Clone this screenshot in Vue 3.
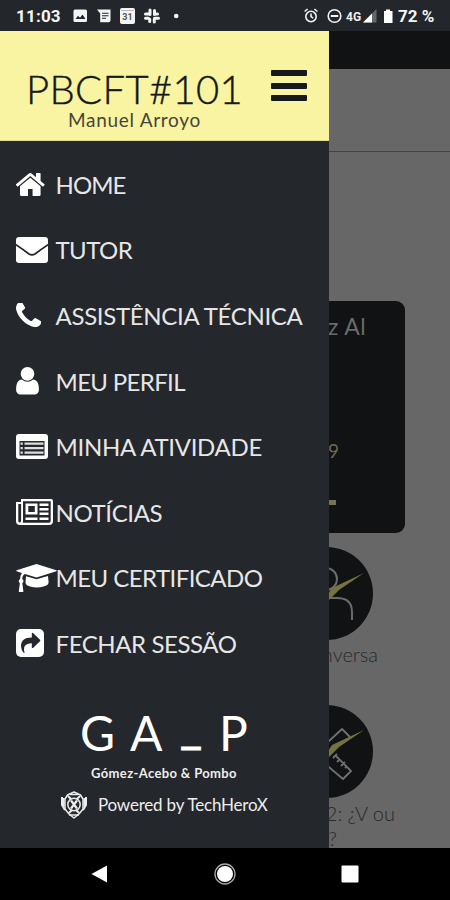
<script setup>
const items = [
  { label: 'HOME', icon: 'home', w: 28.6, h: 23, box: '97 253 1600 1284', spacing: -0.9 },
  { label: 'TUTOR', icon: 'mail', w: 32, h: 26, box: '0 0 32 26', spacing: -0.55 },
  { label: 'ASSISTÊNCIA TÉCNICA', icon: 'phone', w: 25.2, h: 25.2, box: '192 192 1408 1408', spacing: -0.32 },
  { label: 'MEU PERFIL', icon: 'user', w: 23, h: 27.4, box: '256 128 1280 1536', spacing: -0.65 },
  { label: 'MINHA ATIVIDADE', icon: 'list', w: 32, h: 25, box: '0 0 32 25', spacing: -0.3 },
  { label: 'NOTÍCIAS', icon: 'news', w: 37, h: 26, box: '0 0 37 26', spacing: -0.38 },
  { label: 'MEU CERTIFICADO', icon: 'cap', w: 41, h: 28, box: '0 0 41 28', spacing: -0.56 },
  { label: 'FECHAR SESSÃO', icon: 'share', w: 28, h: 28, box: '0 0 28 28', spacing: -0.42 },
]
</script>

<template>
  <div class="phone">
    <header class="status">
      <span class="clock">11:03</span>
      <svg class="notifs" width="110" height="20" viewBox="0 0 110 20">
        <rect x="1.500" y="3.500" width="13.500" height="12.500" rx="1.500" fill="#f4f4f4" />
        <path d="M3.500 13 6 9.800l2 2 2.500-3.300L13.500 13z" fill="#23272b" />
        <path d="M25 3.500h13.500v10.700a2 2 0 0 1-2 2h-8.300V7.500z" fill="#f4f4f4" />
        <path d="M30 7.300h6.500M30 9.800h6.500M30 12.300h4" stroke="#23272b" stroke-width="1.100" />
        <rect x="48" y="2" width="15" height="16" rx="2" fill="#f4f4f4" />
        <path d="M49 4.500h13" stroke="#bbb" stroke-width="1" />
        <text x="55.500" y="13.800" class="cal">31</text>
        <g stroke="#f4f4f4" stroke-width="3" stroke-linecap="round">
          <path d="M78 4v4.500M82.500 4.500v4M73.500 8h4.500M83 8h2.500M73.500 12.300h3M82.500 12.300h4M77.700 13v2.500M82.300 13v3" />
        </g>
        <circle cx="104.200" cy="10" r="2.300" fill="#f4f4f4" />
      </svg>
      <svg class="system" width="94" height="20" viewBox="0 0 94 20">
        <g fill="none" stroke="#f2f2f2" stroke-width="1.600">
          <circle cx="9" cy="10.500" r="5.200" />
          <path d="M9 7.500v3.200l2.200 1.500M2.600 5.500l3-2.500M15.400 5.500l-3-2.500" />
          <circle cx="32.500" cy="10" r="6.300" />
          <path d="M28.800 10h7.400" stroke-width="2" />
        </g>
        <text x="44" y="14.800" class="net">4G</text>
        <path d="M61 16.500h13.500V3z" fill="#666" />
        <path d="M61 16.500h9V7.500z" fill="#fff" />
        <path d="M82 5h2V3.500h4V5h2.500v12H82z" fill="#fff" />
      </svg>
      <span class="battery">72 %</span>
    </header>

    <main class="stage">
      <section class="page">
        <div class="topbar"></div>
        <div class="subbar"></div>
        <div class="card">
          <p class="card-name">z Al</p>
          <p class="card-num">9</p>
          <span class="card-dash"></span>
        </div>
        <svg class="disc" width="93" height="93" viewBox="0 0 93 93">
          <circle cx="46.500" cy="46.500" r="46.500" fill="#101214" />
          <g fill="none" stroke="#6b6b6b" stroke-width="2">
            <circle cx="46" cy="32" r="11" />
            <path d="M48 51h9q15 0 15 14v8" />
          </g>
          <path d="M40 59 52 41 84 26 59 43 45 57z" fill="#75733f" />
        </svg>
        <p class="caption">nversa</p>
        <svg class="disc second" width="93" height="93" viewBox="0 0 93 93">
          <circle cx="46.500" cy="46.500" r="46.500" fill="#101214" />
          <g fill="none" stroke="#707070" stroke-width="1.800" stroke-linejoin="round">
            <path d="M48 37 62 24l8 8M43 57l20 17 8-8-15-15M53 53l4-4M57 57l3-3M61 61l4-4M65 63l2-2" />
          </g>
          <path d="M40 58 52 40 84 25 59 42 45 56z" fill="#75733f" />
        </svg>
        <p class="caption wide">2: ¿V ou</p>
        <p class="caption last">?</p>
      </section>

      <aside class="drawer">
        <div class="head">
          <div class="titles">
            <h1>PBCFT#101</h1>
            <p>Manuel Arroyo</p>
          </div>
          <div class="burger"><i></i><i></i><i></i></div>
        </div>
        <nav>
          <a v-for="it in items" :key="it.icon" class="item">
            <span class="ico">
              <svg :width="it.w" :height="it.h" :viewBox="it.box" fill="#fff">
                <path v-if="it.icon === 'home'" d="M1472 992v480q0 26-19 45t-45 19h-384v-384h-256v384h-384q-26 0-45-19t-19-45v-480q0-1 .5-3t.5-3l575-474 575 474q1 2 1 6zm223-69l-62 74q-8 9-21 11h-3q-13 0-21-7l-692-577-692 577q-12 8-24 7-13-2-21-11l-62-74q-8-10-7-23.500t11-21.500l719-599q32-26 76-26t76 26l244 204v-195q0-14 9-23t23-9h192q14 0 23 9t9 23v408l219 182q10 8 11 21.500t-7 23.500z" />
                <template v-else-if="it.icon === 'mail'">
                  <rect width="32" height="26" rx="3.200" />
                  <path d="M-.5 7.500Q7 12.500 13 17q3 1.800 6 0 6-4.500 13.500-9.500" fill="none" stroke="#24272b" stroke-width="1.700" />
                </template>
                <path v-else-if="it.icon === 'phone'" d="M1600 1240q0 27-10 70.500t-21 68.500q-21 50-122 106-94 51-186 51-27 0-53-3.500t-57.500-12.500-47-14.500-55.500-20.500-49-18q-98-35-175-83-127-79-264-216t-216-264q-48-77-83-175-3-9-18-49t-20.500-55.500-14.500-47-12.500-57.500-3.500-53q0-92 51-186 56-101 106-122 25-11 68.500-21t70.500-10q14 0 21 3 18 6 53 76 11 19 30 54t35 63.500 31 53.500q3 4 17.500 25t21.500 35.500 7 28.500q0 20-28.500 50t-62 55-62 53-28.500 46q0 9 5 22.500t8.500 20.500 14 24 11.500 19q76 137 174 235t235 174q2 1 19 11.500t24 14 20.500 8.500 22.500 5q18 0 46-28.500t53-62 55-62 50-28.500q14 0 28.500 7t35.500 21.500 25 17.500q25 15 53.500 31t63.500 35 54 30q70 35 76 53 3 7 3 21z" />
                <path v-else-if="it.icon === 'user'" d="M1536 1399q0 109-62.500 187t-150.500 78h-854q-88 0-150.500-78t-62.500-187q0-85 8.500-160.500t31.500-152 58.500-131 94-89 134.500-34.500q131 128 313 128t313-128q76 0 134.500 34.500t94 89 58.500 131 31.500 152 8.500 160.500zm-256-887q0 159-112.500 271.500t-271.500 112.500-271.500-112.500-112.500-271.500 112.500-271.500 271.500-112.500 271.500 112.500 112.500 271.500z" />
                <template v-else-if="it.icon === 'list'">
                  <path fill-rule="evenodd" d="M3 0h26a3 3 0 0 1 3 3v19a3 3 0 0 1-3 3H3a3 3 0 0 1-3-3V3a3 3 0 0 1 3-3zM3.500 7v14.500h25V7z" />
                  <path d="M4.500 8.500h2.300v2.200H4.500zM4.500 13h2.300v2.200H4.500zM4.500 17.500h2.300v2.200H4.500zM8.500 8.500h19v2.200h-19zM8.500 13h19v2.200h-19zM8.500 17.500h19v2.200h-19z" fill="#ddd" />
                </template>
                <template v-else-if="it.icon === 'news'">
                  <path fill-rule="evenodd" d="M5 0h30a2 2 0 0 1 2 2v20a4 4 0 0 1-4 4H4a4 4 0 0 1-4-4V3h5zM7 2.300V22q0 1-.4 1.700H33q1.700 0 1.700-1.700V2.300zM2.300 5v17a1.400 1.400 0 0 0 2.800 0V5z" />
                  <path fill-rule="evenodd" d="M9.500 4.500h12v11h-12zM12.300 7v6h6.500V7z" />
                  <path d="M23.500 4.500h9v2.400h-9zM23.500 9h9v2.400h-9zM23.500 13.500h9v2.400h-9zM9.500 18.500h12v2.400h-12zM23.500 18.500h9v2.400h-9z" />
                </template>
                <template v-else-if="it.icon === 'cap'">
                  <path d="M20.500 0 40.300 6.300q1 .5 0 1L20.500 13.600 9 10q-2.600 1-2.800 5 1.400.8 1.300 2.300-.1 1.200-1.200 2l1.100 8q0 .7-.7.700H3.500q-.8 0-.7-.7l1.100-8q-1.100-.8-1.200-2 0-1.500 1.400-2.300 .1-3.600 1.800-6L.7 7.300q-1-.5 0-1z" />
                  <path d="M10 12.300 20.500 15.300 32 12l.6 6.600q-.2 2.800-5 4-7 1.700-13.500 0-4.500-1.200-4.600-4z" />
                </template>
                <template v-else>
                  <rect width="28" height="28" rx="5" />
                  <path d="M15.800 4.300v4.200C8.500 8.500 5 11.500 5 17.300q0 3.500 2.800 6.700.8.400.7-.5C7 18 9 14.300 15.800 14.300v4.200q.3.900 1.200.4l7-6.700q.6-.7 0-1.400l-7-6.900q-.9-.5-1.200.4z" fill="#24272b" />
                </template>
              </svg>
            </span>
            <span class="label" :style="{ letterSpacing: it.spacing + 'px' }">{{ it.label }}</span>
          </a>
        </nav>
        <footer>
          <div class="brand"><b>G</b><b>A</b><b class="under">_</b><b>P</b></div>
          <p class="firm">Gómez-Acebo &amp; Pombo</p>
          <div class="powered">
            <svg width="26" height="28" viewBox="0 0 26 28" fill="none" stroke="#ececec" stroke-width="1.500" stroke-linejoin="round">
              <path d="M13 1 6.500 4 4 8v10l4 5 5 4 5-4 4-5V8l-2.500-4z" />
              <path d="M1 6v8l3 5M25 6v8l-3 5M2.500 7v8M23.500 7v8M7 5l3 3M19 5l-3 3M8 22l3-3M18 22l-3-3" stroke-width="2" />
              <circle cx="13" cy="13.500" r="6.200" />
              <path d="M10 9.500 16 17.500M16 9.500 10 17.500" stroke-width="2.200" />
              <path d="M8 24h10M9 3.500h8" />
            </svg>
            <span>Powered by TechHeroX</span>
          </div>
        </footer>
      </aside>
    </main>

    <div class="navbar">
      <svg width="17" height="18" viewBox="0 0 17 18"><path d="M16 .5v17L.5 9z" fill="#fff" /></svg>
      <svg width="22" height="22" viewBox="0 0 22 22"><circle cx="11" cy="11" r="10" fill="none" stroke="#aaa" stroke-width="1.300" /><circle cx="11" cy="11" r="8" fill="#fff" /></svg>
      <svg width="18" height="18" viewBox="0 0 18 18"><rect x=".5" y=".5" width="17" height="17" rx="1" fill="#fff" /></svg>
    </div>
  </div>
</template>

<style>
body { margin: 0; background: #000; }
</style>

<style scoped>
* { box-sizing: border-box; }
p, h1 { margin: 0; font-weight: 400; }
svg { display: block; flex: none; }
.phone { width: 450px; height: 900px; display: flex; flex-direction: column; overflow: hidden; font-family: Lato, sans-serif; background: #000; }
.status { height: 31px; flex: none; background: #23272b; display: flex; align-items: center; padding: 1px 0 0 16px; color: #f5f5f5; font-family: Roboto, sans-serif; font-weight: 700; font-size: 17px; white-space: nowrap; }
.clock { width: 56px; letter-spacing: .2px; }
.notifs { margin-top: -1px; }
.system { margin-left: 120px; margin-top: -1px; }
.battery { margin-left: 2px; }
.cal { font: 700 9px Roboto, sans-serif; fill: #555; text-anchor: middle; }
.net { font: 700 12px Roboto, sans-serif; fill: #eee; }
.stage { flex: none; height: 817px; position: relative; overflow: hidden; }
.page { height: 817px; background: #676767; display: flex; flex-direction: column; }
.topbar { height: 38px; flex: none; background: #101214; }
.subbar { height: 83px; flex: none; border-bottom: 1px solid #444; }
.card { flex: none; margin: 149px 45px 0; height: 232px; border-radius: 9px; background: #101214; display: flex; flex-direction: column; align-items: flex-end; }
.card-name { margin: 10px 39px 0 0; height: 30px; font-size: 23px; line-height: 30px; color: #6a6a6a; letter-spacing: .4px; }
.card-num { margin: 95px 66px 0 0; height: 30px; font-size: 19px; line-height: 30px; color: #6b6a4c; }
.card-dash { margin: 34px 69px 0 0; width: 14px; height: 5px; background: #77754f; }
.disc { margin: 14px 0 0 280px; }
.disc.second { margin-top: 37px; }
.caption { flex: none; margin-top: 1px; padding-right: 72px; height: 27px; line-height: 27px; text-align: right; font-size: 20px; font-weight: 300; color: #292929; }
.caption.wide { padding-right: 55px; margin-top: 2px; }
.caption.last { padding-right: 113px; height: 20px; line-height: 20px; }
.drawer { position: absolute; inset: 0 auto 0 0; width: 329px; background: #24272b; display: flex; flex-direction: column; }
.head { height: 110px; flex: none; background: #f8f4a1; display: flex; color: #16181a; border-bottom: 1px solid #dddb94; }
.titles { width: 271px; padding-top: 38px; }
h1 { padding-left: 26px; font-size: 40px; line-height: 40px; font-weight: 300; letter-spacing: .35px; -webkit-text-stroke: .4px #16181a; white-space: nowrap; }
.titles p { padding-left: 68px; font-size: 19px; line-height: 21px; letter-spacing: .7px; color: #45453a; white-space: nowrap; }
.burger { width: 36px; margin-top: 39px; display: flex; flex-direction: column; gap: 6.5px; }
.burger i { height: 6px; border-radius: 1px; background: #16181c; }
nav { padding-top: 11px; flex: none; }
.item { height: 65.6px; display: flex; align-items: center; padding-left: 16px; }
.ico { width: 39.5px; flex: none; display: flex; margin-top: -1px; }
.label { font-size: 24px; line-height: 30px; color: #e6e6e6; white-space: nowrap; }
footer { padding-top: 27px; color: #fff; }
.brand { display: flex; height: 58px; padding-left: 80px; font-size: 48px; line-height: 58px; }
.brand b { font-weight: 400; width: 50px; }
.brand .under { width: 39px; position: relative; top: -8px; -webkit-text-stroke: 1px #fff; }
.firm { padding-left: 91px; margin-top: 3px; font-size: 13px; line-height: 16px; letter-spacing: .37px; font-weight: 700; color: #eee; }
.powered { display: flex; align-items: center; padding-left: 61px; gap: 11px; margin-top: 10px; font-size: 17px; letter-spacing: -.2px; color: #eee; white-space: nowrap; }
.navbar { height: 52px; flex: none; background: #000; display: flex; align-items: center; justify-content: space-between; padding: 0 91px; }
</style>
